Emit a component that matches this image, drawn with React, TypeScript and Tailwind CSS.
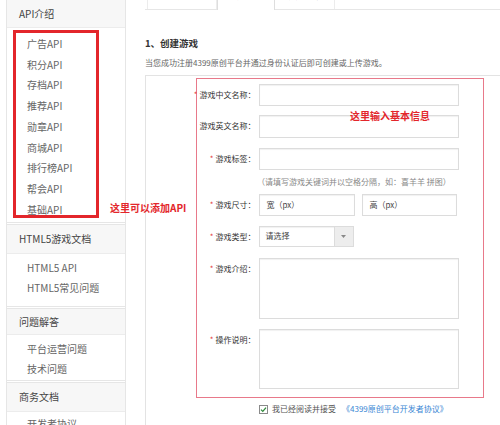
const cjk = { fontFamily: '"Noto Sans CJK SC", "Noto Sans", sans-serif' };

const sections = [
  {
    title: "API介绍",
    headerH: "h-[28px]",
    items: ["广告API", "积分API", "存档API", "推荐API", "勋章API", "商城API", "排行榜API", "帮会API", "基础API"],
    itemH: "h-[20.75px]",
    pad: "pt-[5px] pb-[2px]",
  },
  {
    title: "HTML5游戏文档",
    headerH: "h-[29px]",
    items: ["HTML5 API", "HTML5常见问题"],
    itemH: "h-[20px]",
    pad: "pt-[4px] pb-[8px]",
  },
  {
    title: "问题解答",
    headerH: "h-[26px]",
    items: ["平台运营问题", "技术问题"],
    itemH: "h-[20px]",
    pad: "pt-[4px] pb-[1px]",
  },
  {
    title: "商务文档",
    headerH: "h-[29px]",
    items: ["开发者协议"],
    itemH: "h-[20px]",
    pad: "pt-[2px] pb-[4px]",
  },
];

function Sidebar() {
  return (
    <div className="ml-[6px] w-[120px] shrink-0 border-x border-[#e6e6e6] flex flex-col">
      {sections.map((s, i) => (
        <div key={s.title} className={i > 0 ? "mt-[1px] border-t border-[#e6e6e6]" : ""}>
          <div className={`${s.headerH} flex items-center pl-[12px] bg-[#f7f7f7] border-b border-[#ececec] text-[10px] text-[#444]`}>
            {s.title}
          </div>
          <div className={`${s.pad} border-b border-[#e6e6e6]`}>
            {s.items.map((it) => (
              <div key={it} className={`${s.itemH} flex items-center pl-[20px] text-[10px] text-[#666]`}>
                {it}
              </div>
            ))}
          </div>
        </div>
      ))}
    </div>
  );
}

function Label({ text, star = true }: { text: string; star?: boolean }) {
  return (
    <div className="w-[58.5px] h-[22px] shrink-0 flex items-center justify-end text-[8px] text-[#333] whitespace-nowrap">
      {star && <span className="text-[#e23b3b] mr-[2px]">*</span>}
      {text}
    </div>
  );
}

const box = "border border-[#dcdcdc] bg-white shadow-[inset_0_1px_1px_rgba(0,0,0,0.06)]";

function Form() {
  return (
    <div className="border-l border-t border-[#e3e3e3] flex-1 flex flex-col">
      <div className="ml-[50px] mt-[2px] w-[288px] border-[1.5px] border-[#e8798a] pt-[4.5px] pb-[8.5px] flex flex-col">
        <div className="flex items-start">
          <Label text="游戏中文名称：" />
          <div className={`ml-[3px] w-[200px] h-[22px] ${box}`} />
        </div>
        <div className="flex items-start mt-[9px]">
          <Label text="游戏英文名称：" star={false} />
          <div className={`ml-[3px] w-[200px] h-[23px] ${box}`} />
        </div>
        <div className="flex items-start mt-[10px]">
          <Label text="游戏标签：" />
          <div className={`ml-[3px] w-[200px] h-[22px] ${box}`} />
        </div>
        <div className="h-[24px] flex items-center pl-[60px] text-[8px] text-[#888] whitespace-nowrap">
          （请填写游戏关键词并以空格分隔，如：喜羊羊 拼图）
        </div>
        <div className="flex items-start">
          <Label text="游戏尺寸：" />
          <div className={`ml-[3px] w-[96px] h-[22px] ${box} flex items-center pl-[7px] text-[8px] text-[#444]`}>宽（px）</div>
          <div className={`ml-[7px] w-[95px] h-[22px] ${box} flex items-center pl-[7px] text-[8px] text-[#444]`}>高（px）</div>
        </div>
        <div className="flex items-start mt-[10px]">
          <Label text="游戏类型：" />
          <div className={`ml-[3px] w-[95px] h-[21px] ${box} flex items-stretch`}>
            <div className="flex-1 flex items-center pl-[6px] text-[8px] text-[#444]">请选择</div>
            <div className="w-[19px] bg-[#ededed] border-l border-[#dcdcdc] flex items-center justify-center">
              <svg width="5" height="3" viewBox="0 0 5 3">
                <path d="M0 0h5L2.5 3z" fill="#888" />
              </svg>
            </div>
          </div>
        </div>
        <div className="flex items-start mt-[10px]">
          <Label text="游戏介绍：" />
          <div className={`ml-[3px] w-[200px] h-[61px] ${box}`} />
        </div>
        <div className="flex items-start mt-[10px]">
          <Label text="操作说明：" />
          <div className={`ml-[3px] w-[200px] h-[60px] ${box}`} />
        </div>
      </div>
      <div className="ml-[113px] mt-[5px] h-[12px] flex items-center text-[8px] whitespace-nowrap">
        <div className="w-[9px] h-[9px] border border-[#8a8a8a] bg-white flex items-center justify-center">
          <svg width="7" height="7" viewBox="0 0 7 7">
            <path d="M1 3.6l1.8 1.8L6 1.6" stroke="#2f8a3a" strokeWidth="1.3" fill="none" />
          </svg>
        </div>
        <span className="ml-[4px] text-[#555]">我已经阅读并接受</span>
        <span className="ml-[6px] text-[#3a86d4]">《4399原创平台开发者协议》</span>
      </div>
    </div>
  );
}

function Tabs() {
  return (
    <div className="h-[30px] border-b border-[#e6e6e6] flex items-end pl-[2px] text-[9px] text-[#666] shrink-0">
      <div className="w-[70px] h-[28px] border-x border-t border-[#ececec] flex items-center justify-center pl-[10px]">注册帐号</div>
      <div className="w-[58px] h-[30px] border-x border-t border-[#dedede] bg-white -mb-px flex items-center justify-center">创建游戏</div>
      <div className="w-[60px] h-[28px] border-r border-t border-[#ececec] flex items-center justify-center">提交审核</div>
      <div className="w-[56px] h-[28px] flex items-center justify-center">审核发布</div>
    </div>
  );
}

export default function App() {
  return (
    <div className="relative w-[500px] h-[425px] overflow-hidden bg-white flex" style={cjk}>
      <Sidebar />
      <div className="ml-[19px] flex-1 flex flex-col -mt-[20px]">
        <Tabs />
        <div className="mt-[26px] h-[14px] flex items-center text-[9.5px] font-bold text-[#333]">1、创建游戏</div>
        <div className="mt-[7px] h-[12px] flex items-center text-[8px] text-[#666] whitespace-nowrap">
          当您成功注册4399原创平台并通过身份认证后即可创建或上传游戏。
        </div>
        <div className="mt-[6px] flex-1 flex">
          <Form />
        </div>
      </div>

      <div className="absolute left-[13px] top-[30px] w-[86px] h-[188px] border-[3px] border-[#e3262b]" />
      <div className="absolute left-[110px] top-[202px] text-[10px] leading-[12px] font-bold text-[#e3262b] whitespace-nowrap">
        这里可以添加API
      </div>
      <div className="absolute left-[350px] top-[110px] text-[10px] leading-[12px] font-bold text-[#e3262b] whitespace-nowrap">
        这里输入基本信息
      </div>
    </div>
  );
}
